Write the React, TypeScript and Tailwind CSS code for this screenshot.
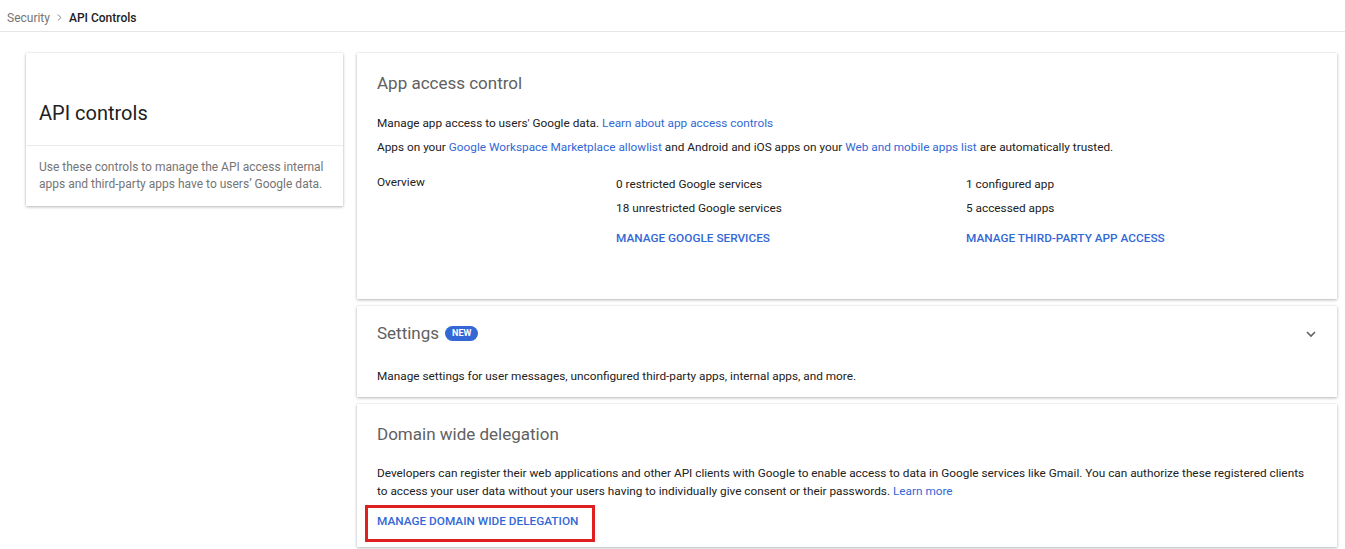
import { ChevronRight } from "lucide-react";

const card = "bg-white shadow-[0_1px_3px_rgba(0,0,0,0.28),0_0_1px_rgba(0,0,0,0.12)]";
const link = "text-[#3367d6]";

export default function App() {
  return (
    <div className="min-h-screen bg-white font-['Roboto',sans-serif] text-[11.8px] text-[#212121]">
      <div className="flex h-[32px] items-center border-b border-[#e6e6e6] pl-[7px] pt-[4px] text-[12px]">
        <span className="text-[#757575]">Security</span>
        <ChevronRight className="mx-[4px] h-[11px] w-[11px] text-[#757575]" strokeWidth={2} />
        <span className="font-medium text-[#202124]">API Controls</span>
      </div>

      <div className="flex gap-[14px] pl-[26px] pt-[21px]">
        <div className={`${card} h-[153px] w-[317px] shrink-0`}>
          <div className="flex h-[93px] items-end border-b border-[#ebebeb] px-[13px] pb-[19px]">
            <h1 className="text-[20px] leading-[26px] text-[#212121]">API controls</h1>
          </div>
          <p className="px-[13px] pt-[13px] text-[12px] leading-[17px] text-[#757575]">
            Use these controls to manage the API access internal apps and third-party apps have to users’ Google data.
          </p>
        </div>

        <div className="flex w-[980px] flex-col gap-[7px]">
          <section className={`${card} px-[20px] pt-[18px] pb-[52px]`}>
            <h2 className="text-[17px] leading-[24px] text-[#616161]">App access control</h2>
            <p className="mt-[19px] leading-[18px]">
              Manage app access to users' Google data. <span className={link}>Learn about app access controls</span>
            </p>
            <p className="mt-[6px] leading-[18px]">
              Apps on your <span className={link}>Google Workspace Marketplace allowlist</span> and Android and iOS apps on your{" "}
              <span className={link}>Web and mobile apps list</span> are automatically trusted.
            </p>
            <div className="mt-[17px] flex">
              <div className="w-[239px] leading-[18px]">Overview</div>
              <div className="flex w-[350px] flex-col pt-[2px] leading-[18px]">
                <span>0 restricted Google services</span>
                <span className="mt-[6px]">18 unrestricted Google services</span>
                <span className={`${link} mt-[12px] font-medium`}>MANAGE GOOGLE SERVICES</span>
              </div>
              <div className="flex flex-col pt-[2px] leading-[18px]">
                <span>1 configured app</span>
                <span className="mt-[6px]">5 accessed apps</span>
                <span className={`${link} mt-[12px] font-medium`}>MANAGE THIRD-PARTY APP ACCESS</span>
              </div>
            </div>
          </section>

          <section className={`${card} px-[20px] pt-[15px] pb-[12px]`}>
            <div className="flex items-center">
              <h2 className="text-[17px] leading-[24px] text-[#616161]">Settings</h2>
              <span className="ml-[6px] rounded-full bg-[#3367d6] px-[7px] py-[1px] text-[9px] font-bold leading-[13px] text-white">NEW</span>
              <svg className="ml-auto mr-0 mt-[2px] h-[12px] w-[12px] text-[#5f6368]" viewBox="0 0 12 12" fill="none">
                <path d="M2 4l4 4 4-4" stroke="currentColor" strokeWidth="1.6" />
              </svg>
            </div>
            <p className="mt-[22px] leading-[18px]">
              Manage settings for user messages, unconfigured third-party apps, internal apps, and more.
            </p>
          </section>

          <section className={`${card} px-[20px] pt-[18px] pb-[5px]`}>
            <h2 className="text-[17px] leading-[24px] text-[#616161]">Domain wide delegation</h2>
            <p className="mt-[18px] leading-[18px]">
              Developers can register their web applications and other API clients with Google to enable access to data in Google services like Gmail. You can authorize these registered clients to access your user data without your users having to individually give consent or their passwords.{" "}
              <span className={link}>Learn more</span>
            </p>
            <div className="mt-[5px] ml-[-12px] w-[230px] border-[3px] border-[#e02020] pl-[9px] pt-[4px] pb-[8px]">
              <span className={`${link} font-medium leading-[18px]`}>MANAGE DOMAIN WIDE DELEGATION</span>
            </div>
          </section>
        </div>
      </div>
    </div>
  );
}
